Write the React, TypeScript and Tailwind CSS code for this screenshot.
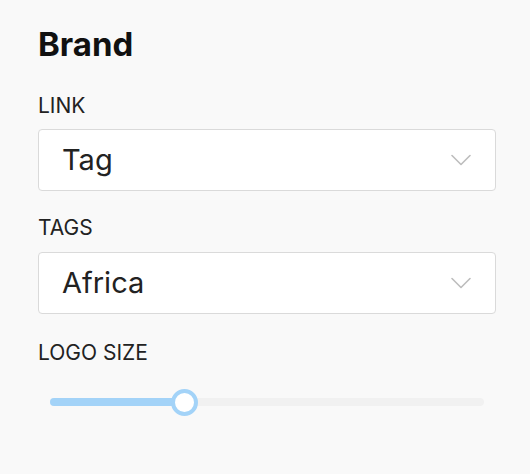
import React, { useState } from 'react'

const font = { fontFamily: 'Inter, "Noto Sans", sans-serif' }

function Chevron() {
  return (
    <svg width="20" height="12" viewBox="0 0 20 12" fill="none" className="shrink-0">
      <path d="M1 1.5 L10 10.5 L19 1.5" stroke="#bdbdbd" strokeWidth="1.6" strokeLinecap="round" strokeLinejoin="round" />
    </svg>
  )
}

function SelectBox({ value }: { value: string }) {
  return (
    <div className="flex items-center justify-between h-[62px] rounded-[4px] border-[1.5px] border-[#dadada] bg-white pl-[23px] pr-[24px]">
      <span className="text-[29px] text-[#222]">{value}</span>
      <Chevron />
    </div>
  )
}

function Label({ children }: { children: React.ReactNode }) {
  return <div className="text-[21px] leading-none text-[#222]">{children}</div>
}

export default function App() {
  const [size] = useState(31)

  return (
    <div style={font} className="w-[530px] h-[474px] bg-[#f9f9f9] pl-[38px] pr-[34px] pt-[28px]">
      <div className="text-[33px] font-bold leading-none text-[#111]">Brand</div>

      <div className="mt-[34px]">
        <Label>LINK</Label>
        <div className="mt-[13px]">
          <SelectBox value="Tag" />
        </div>
      </div>

      <div className="mt-[26px]">
        <Label>TAGS</Label>
        <div className="mt-[14px]">
          <SelectBox value="Africa" />
        </div>
      </div>

      <div className="mt-[28px]">
        <Label>LOGO SIZE</Label>
        <div className="relative mt-[25px] mx-[12px] h-[28px] flex items-center">
          <div className="h-[8px] w-full rounded-full bg-[#f1f1f1]" />
          <div
            className="absolute left-0 h-[8px] rounded-full bg-[#a3d3f8]"
            style={{ width: `${size}%` }}
          />
          <div
            className="absolute w-[27px] h-[27px] -ml-[13.5px] rounded-full bg-white border-[4px] border-[#a3d3f8]"
            style={{ left: `${size}%` }}
          />
        </div>
      </div>
    </div>
  )
}
